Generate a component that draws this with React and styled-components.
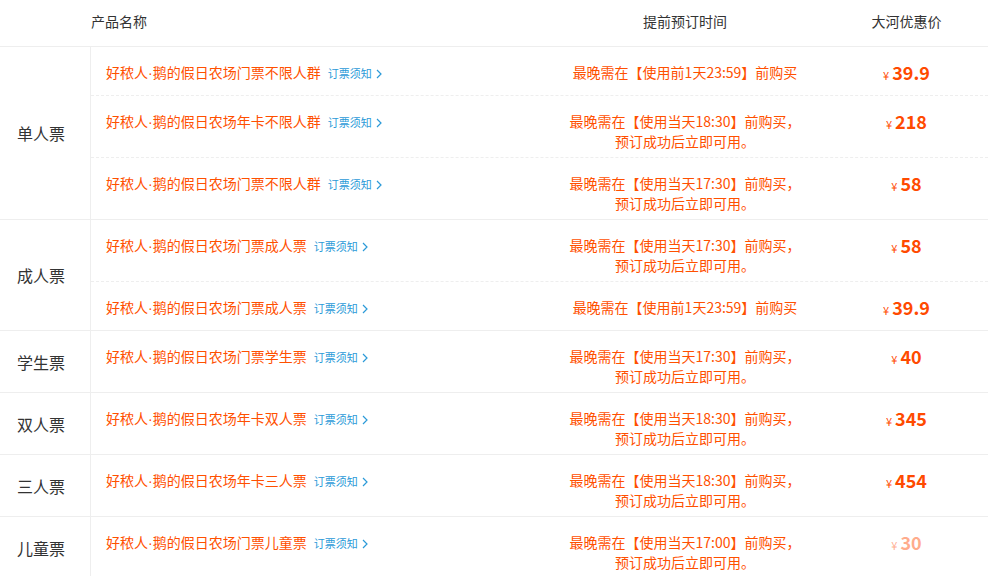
import React from 'react'
import styled, { createGlobalStyle } from 'styled-components'

const COLORS = {
  ORANGE: '#ff5000',
  PRICE: '#ff4a00',
  BLUE: '#2b9ad8',
  TEXT: '#333',
  LINE: '#eeeeee',
}

const GlobalStyle = createGlobalStyle`
  html, body {
    margin: 0;
    padding: 0;
    background: #fff;
    font-family: "Noto Sans CJK SC", "Noto Sans", sans-serif;
    color: ${COLORS.TEXT};
  }
`

const Table = styled.div`
  width: 988px;
`

const HeaderRow = styled.div`
  display: grid;
  grid-template-columns: 91px 454px 280px 163px;
  height: 47px;
  box-sizing: border-box;
  padding-bottom: 4px;
  align-items: center;
  border-bottom: 1px solid ${COLORS.LINE};
  font-size: 14px;
  color: ${COLORS.TEXT};
`

const HeaderCell = styled.div`
  text-align: ${(p) => (p.$center ? 'center' : 'left')};
`

const Group = styled.div`
  display: grid;
  grid-template-columns: 91px 1fr;
  border-bottom: 1px solid ${COLORS.LINE};
`

const Category = styled.div`
  display: flex;
  align-items: center;
  padding-left: 17px;
  font-size: 16px;
  color: ${COLORS.TEXT};
  border-right: 1px solid ${COLORS.LINE};
`

const SubRows = styled.div`
  display: flex;
  flex-direction: column;
`

const SubRow = styled.div`
  display: grid;
  grid-template-columns: 454px 280px 163px;
  align-items: start;
  min-height: 27px;
  padding: 15px 0 6px;
  line-height: 20px;
  & + & {
    border-top: 1px dashed ${COLORS.LINE};
  }
`

const NameCell = styled.div`
  display: flex;
  align-items: baseline;
  padding-left: 15px;
  font-size: 14px;
  color: ${COLORS.ORANGE};
`

const Dot = styled.span`
  font-family: "Liberation Sans", sans-serif;
`

const Notice = styled.span`
  margin-left: 7px;
  font-size: 11px;
  color: ${COLORS.BLUE};

  svg {
    margin-left: 4px;
    vertical-align: -1px;
  }
`

const TimeCell = styled.div`
  text-align: center;
  font-size: 14px;
  color: ${COLORS.ORANGE};
`

const PriceCell = styled.div`
  text-align: center;
  color: ${COLORS.PRICE};
  opacity: ${(p) => (p.$faded ? 0.45 : 1)};
`

const Yen = styled.span`
  font-size: 11px;
  margin-right: 3px;
`

const Amount = styled.span`
  font-size: 18px;
  font-weight: 700;
`

const Chevron = () => (
  <svg width="6" height="10" viewBox="0 0 6 10">
    <path d="M1 1l4 4-4 4" fill="none" stroke="currentColor" strokeWidth="1.2" />
  </svg>
)

const SAME_DAY = (t) => [`最晚需在【使用当天${t}】前购买，`, '预订成功后立即可用。']
const DAY_BEFORE = ['最晚需在【使用前1天23:59】前购买']

const groups = [
  {
    label: '单人票',
    items: [
      { name: '门票不限人群', time: DAY_BEFORE, price: '39.9' },
      { name: '年卡不限人群', time: SAME_DAY('18:30'), price: '218' },
      { name: '门票不限人群', time: SAME_DAY('17:30'), price: '58' },
    ],
  },
  {
    label: '成人票',
    items: [
      { name: '门票成人票', time: SAME_DAY('17:30'), price: '58' },
      { name: '门票成人票', time: DAY_BEFORE, price: '39.9' },
    ],
  },
  { label: '学生票', items: [{ name: '门票学生票', time: SAME_DAY('17:30'), price: '40' }] },
  { label: '双人票', items: [{ name: '年卡双人票', time: SAME_DAY('18:30'), price: '345' }] },
  { label: '三人票', items: [{ name: '年卡三人票', time: SAME_DAY('18:30'), price: '454' }] },
  {
    label: '儿童票',
    items: [{ name: '门票儿童票', time: SAME_DAY('17:00'), price: '30', faded: true }],
  },
]

const App = () => {
  return (
    <Table>
      <GlobalStyle />
      <HeaderRow>
        <div />
        <HeaderCell>产品名称</HeaderCell>
        <HeaderCell $center>提前预订时间</HeaderCell>
        <HeaderCell $center>大河优惠价</HeaderCell>
      </HeaderRow>
      {groups.map((g) => (
        <Group key={g.label}>
          <Category>{g.label}</Category>
          <SubRows>
            {g.items.map((item, i) => (
              <SubRow key={i}>
                <NameCell>
                  <span>
                    好秾人<Dot>·</Dot>鹅的假日农场{item.name}
                  </span>
                  <Notice>
                    订票须知
                    <Chevron />
                  </Notice>
                </NameCell>
                <TimeCell>
                  {item.time.map((line) => (
                    <div key={line}>{line}</div>
                  ))}
                </TimeCell>
                <PriceCell $faded={item.faded}>
                  <Yen>¥</Yen>
                  <Amount>{item.price}</Amount>
                </PriceCell>
              </SubRow>
            ))}
          </SubRows>
        </Group>
      ))}
    </Table>
  )
}

export default App
